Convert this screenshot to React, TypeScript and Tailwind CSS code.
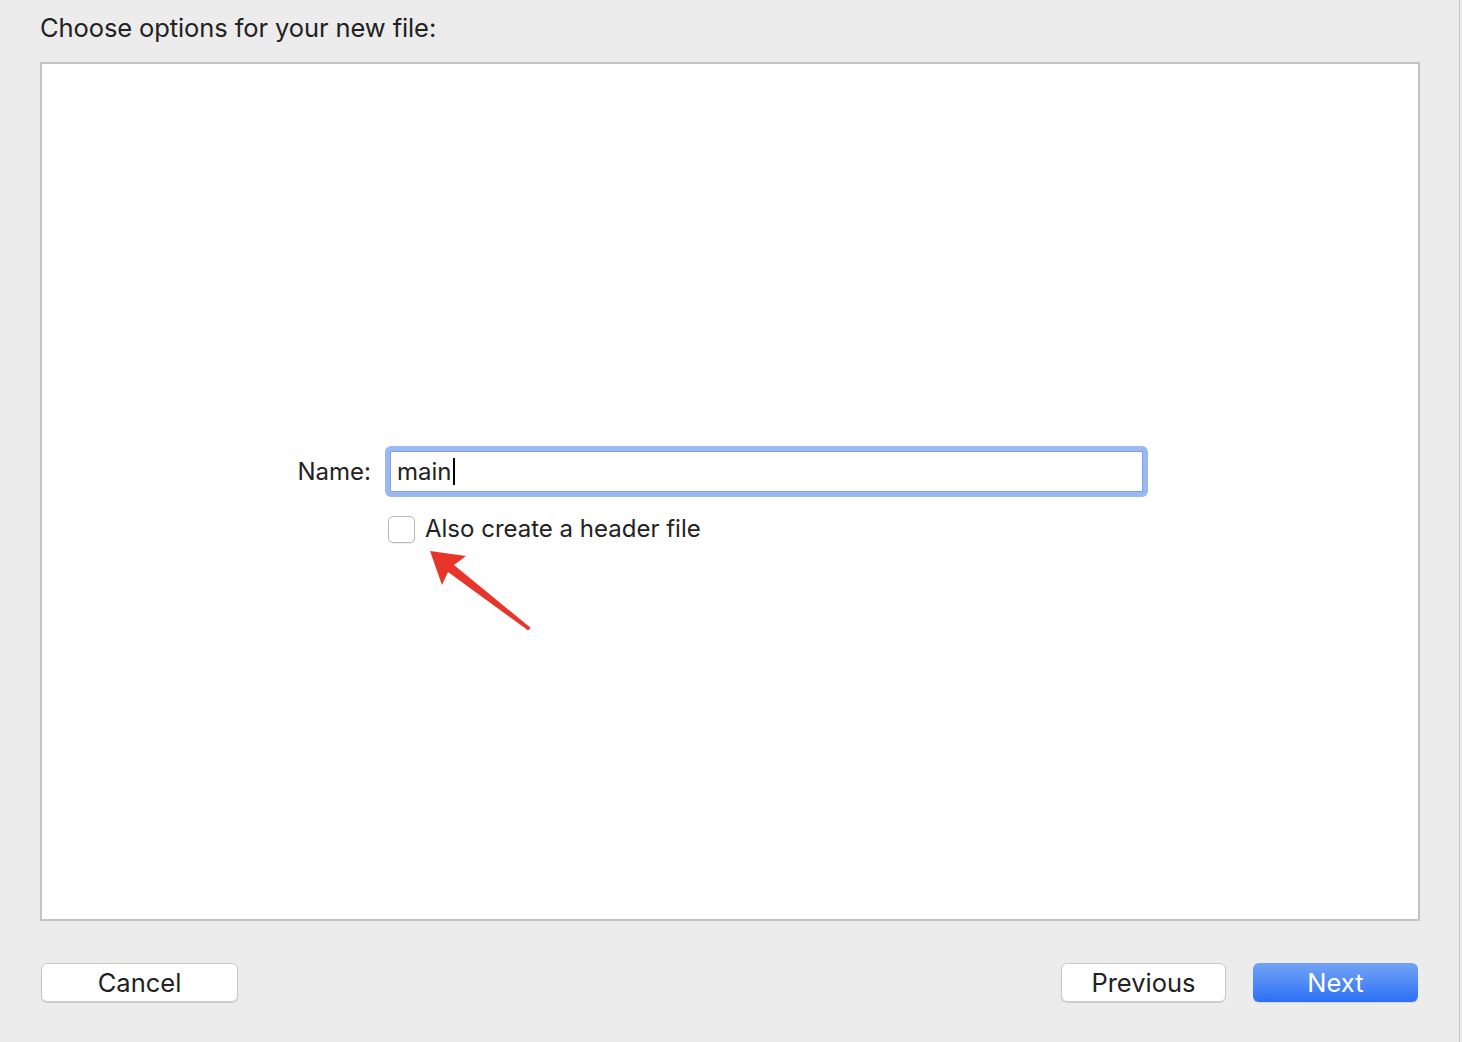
export default function App() {
  const font = { fontFamily: "Inter, 'Noto Sans', sans-serif" };

  return (
    <div
      className="relative w-[1462px] h-[1042px] bg-[#ececec] text-[#222222] overflow-hidden"
      style={font}
    >
      <div className="w-[1460px] h-full border-r border-[#c4c4c4] flex flex-col">
        {/* Title */}
        <div className="pt-[13px] pl-[40px] text-[25.5px] leading-[30px] tracking-[-0.1px]">
          Choose options for your new file:
        </div>

        {/* Options panel */}
        <div className="ml-[40px] mt-[19px] w-[1380px] h-[859px] bg-white border-2 border-[#c3c3c3] flex flex-col pt-[382px]">
          <div className="flex items-center">
            <div className="w-[329px] text-right text-[24px] leading-[30px]">
              Name:
            </div>
            <div className="ml-[14px] w-[763px] h-[51px] rounded-[6px] bg-[#9ab8f2] p-[5px]">
              <div className="h-full bg-white border border-[#7f9fe4] flex items-center pl-[6px] text-[24px]">
                <span>main</span>
                <span className="w-[2px] h-[27px] bg-black ml-[1px]" />
              </div>
            </div>
          </div>
          <div className="flex items-center mt-[17px] ml-[346px]">
            <div className="w-[27px] h-[27px] rounded-[5px] border border-[#b8b8b8] bg-white shadow-[0_1px_1px_rgba(0,0,0,0.06)]" />
            <span className="ml-[10px] text-[24px] leading-[30px]">
              Also create a header file
            </span>
          </div>
        </div>

        {/* Footer buttons */}
        <div className="flex items-center mt-[42px] pl-[41px] pr-[41px]">
          <button className="w-[197px] h-[39px] rounded-[6px] bg-white border border-[#c9c9c9] shadow-[0_1px_1px_rgba(0,0,0,0.12)] text-[25.5px] leading-none">
            Cancel
          </button>
          <div className="flex-1" />
          <button className="w-[165px] h-[39px] rounded-[6px] bg-white border border-[#c9c9c9] shadow-[0_1px_1px_rgba(0,0,0,0.12)] text-[25.5px] leading-none">
            Previous
          </button>
          <button className="ml-[27px] w-[165px] h-[39px] rounded-[6px] bg-gradient-to-b from-[#74a3f5] to-[#2b6ff5] text-white text-[25.5px] leading-none shadow-[0_1px_1px_rgba(0,0,0,0.12)]">
            Next
          </button>
        </div>
      </div>

      {/* Annotation arrow */}
      <svg
        className="absolute left-0 top-0 pointer-events-none"
        width="1462"
        height="1042"
        viewBox="0 0 1462 1042"
      >
        <polygon
          points="430,551 466,556 454,565 529,626.5 527,629.5 448,572 442,585"
          fill="#e8352a"
        />
        <circle cx="528" cy="628" r="2" fill="#e8352a" />
      </svg>
    </div>
  );
}
